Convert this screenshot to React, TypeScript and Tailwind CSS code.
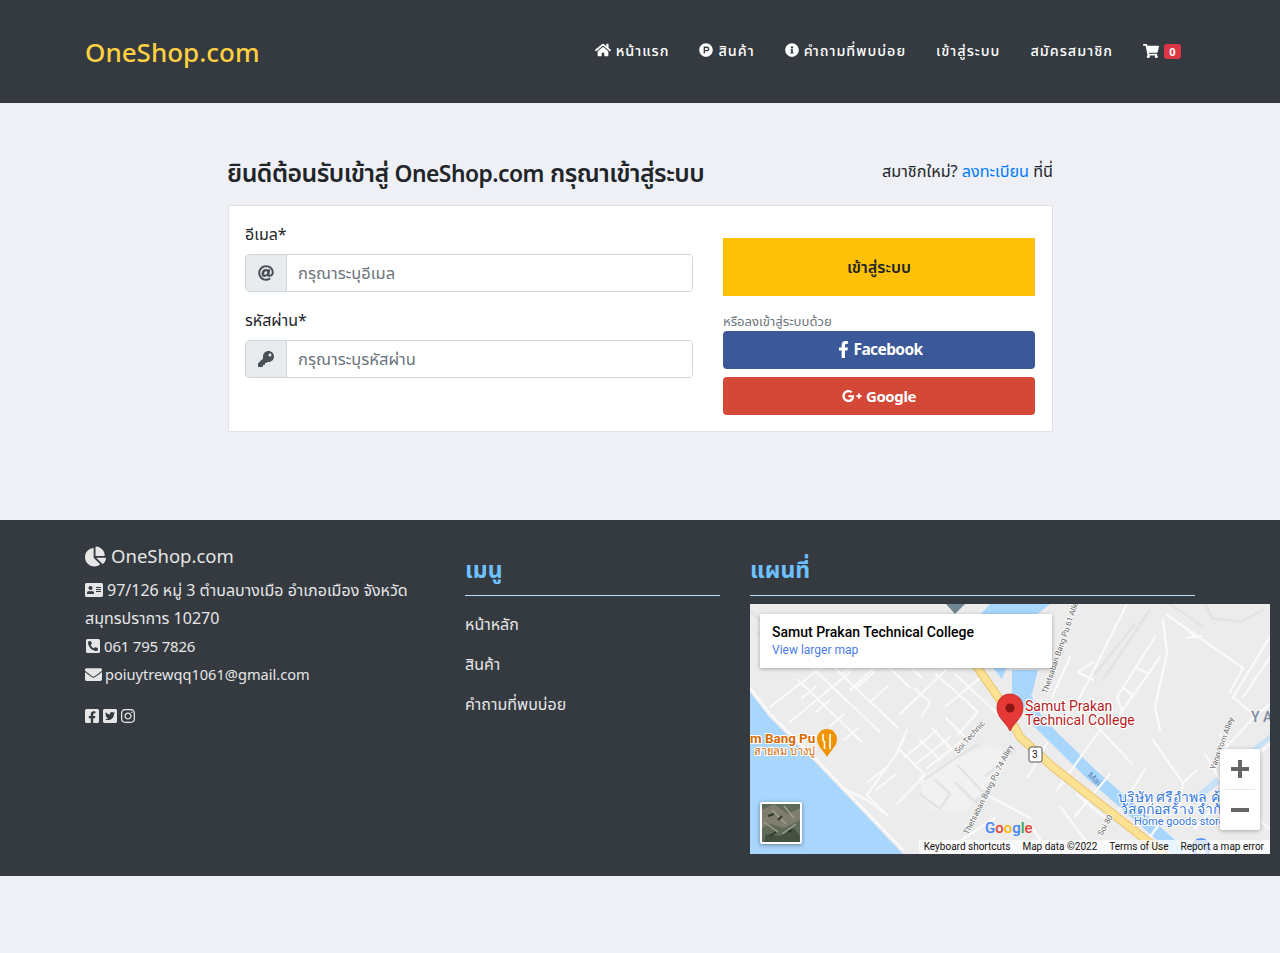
import {
  FaAddressCard,
  FaAt,
  FaChartPie,
  FaEnvelope,
  FaFacebookF,
  FaFacebookSquare,
  FaGooglePlusG,
  FaHome,
  FaInfoCircle,
  FaInstagram,
  FaKey,
  FaPhoneSquareAlt,
  FaProductHunt,
  FaShoppingCart,
  FaTwitterSquare,
} from "react-icons/fa";

const font = "font-['Noto_Sans','Noto_Sans_Thai','Noto_Sans_Thai_Looped',sans-serif]";

const roads = [
  // coast and the streets behind it
  "M0 84 L20 110 L63 152 L153 246",
  "M150 146 L175 171 L148 199",
  "M157 126 L147 149 L117 191 L138 212",
  "M97 186 L117 196 L138 212",
  "M118 178 L138 162 M126 186 L146 170",
  "M155 153 L187 126 M167 159 L200 133 M177 164 L213 136",
  "M170 136 L190 156 M182 124 L202 146 M196 114 L216 134",
  // grid at the left
  "M20 103 L77 59 M40 118 L100 68",
  "M60 62 L130 128 M72 52 L148 124 M48 76 L112 138",
  "M78 58 L96 42 M92 70 L110 54 M106 84 L124 68 M120 98 L138 82",
  "M66 82 L52 94 M80 96 L66 108 M94 110 L80 122 M108 124 L94 136",
  "M120 44 L160 84 M132 36 L172 74 M100 86 L150 40",
  // middle, below the info card
  "M164 84 L180 98 L172 112 M186 70 L228 108 L208 130 M205 70 L250 112",
  "M150 110 L196 66 M196 102 L230 74",
  // right of the yellow road
  "M350 126 L307 186 M297 139 L278 173",
  "M403 136 L433 179 L447 166 M433 179 L430 200",
  "M320 53 L302 93 M377 0 L330 93 L308 120",
  "M328 68 L343 58 M328 68 L343 76",
  "M405 33 L367 93 L373 109 M410 53 L370 110",
  "M385 63 L397 69 M373 84 L383 91",
  "M417 11 L493 64 L480 88 M437 24 L445 34 M437 34 L452 32",
  "M413 16 L417 49 L405 103 L410 126",
  "M520 33 L483 93 M520 53 L493 93",
  "M483 93 L505 112 L470 150 M505 112 L520 100",
  "M455 150 L478 190 M470 130 L490 165 L520 140",
  "M310 202 L345 250 M326 190 L355 214 M280 220 L300 250 M360 170 L325 212",
  "M395 165 L370 205 M420 205 L395 240 M345 120 L382 160",
  "M462 205 L445 225 M490 200 L520 225",
  "M235 190 L280 214 M205 240 L245 214",
];

const faintRoads = [
  "M400 6 L353 76 M385 20 L345 70",
  "M175 175 L200 158 L228 140 M170 190 L190 205 L200 190 L185 176",
  "M205 178 L225 198 L240 184 M208 162 L235 190",
  "M0 6 L14 22 L8 30",
  "M455 0 L462 14 L490 18 L512 6 M420 0 L452 22",
  "M236 172 L265 146",
];

function MapDrawing() {
  return (
    <svg viewBox="0 0 520 250" className="block w-[520px] h-[250px]">
      <rect width="520" height="250" fill="#ececec" />
      <path d="M167 172 L240 140 L262 150 L215 210 L180 205 Z" fill="#f1f1f1" />
      <path d="M0 88 L20 114 L63 156 L153 250 L0 250 Z" fill="#a9d6fd" />
      <path d="M240 0 L300 0 L275 20 L262 50 L252 75 L240 60 L222 20 Z" fill="#a9d6fd" />
      <path d="M262 66 L288 66 L282 90 L262 90 Z" fill="#a9d6fd" />
      <path d="M270 82 L288 118 L340 169 L432 250" fill="none" stroke="#a9d6fd" strokeWidth="12" />
      <path d="M440 195 L520 130 L520 136 L445 200 Z" fill="#c7e2f7" />
      <g fill="none" stroke="#fafafa" strokeWidth="2.2" strokeLinecap="round" strokeLinejoin="round">
        {roads.map((d) => (
          <path key={d} d={d} />
        ))}
      </g>
      <g fill="none" stroke="#e1e3e6" strokeWidth="2.4" strokeLinecap="round" strokeLinejoin="round">
        {faintRoads.map((d) => (
          <path key={d} d={d} />
        ))}
      </g>
      <path d="M205 14 L225 60 L250 96 L270 133 L303 163 L400 239 L415 250" fill="none" stroke="#ecca7e" strokeWidth="9" />
      <path d="M205 14 L225 60 L250 96 L270 133 L303 163 L400 239 L415 250" fill="none" stroke="#fde293" strokeWidth="6.5" />
      <path d="M196 0 L215 0 L205 10 Z" fill="#6f8792" />
      <path
        d="M260 90 C252 90 247 96 247 104 C247 114 256 118 260 127 C264 118 273 114 273 104 C273 96 268 90 260 90 Z"
        fill="#e53935"
        stroke="#b71c1c"
        strokeWidth="0.7"
      />
      <circle cx="260" cy="104" r="4.5" fill="#8b1414" />
      <path
        d="M77 125 C71 125 67 130 67 135 C67 142 73 146 77 153 C81 146 87 142 87 135 C87 130 83 125 77 125 Z"
        fill="#f09300"
      />
      <path d="M73 130 L73 136 L74.5 138 L74.5 145 M80 130 L80 145" stroke="#fff" strokeWidth="1.6" fill="none" />
      <rect x="279" y="143" width="13" height="15" rx="2" fill="#fff" stroke="#555" strokeWidth="1" />
      <circle cx="451" cy="244" r="10" fill="#5e97f6" />
      <path d="M447 243 h8 v6 h-8 Z M449 243 a2 2 0 0 1 4 0" fill="#fff" stroke="#fff" strokeWidth="0.8" />
      <g className="font-['Roboto',sans-serif]">
        <text x="275" y="107" fontSize="14" fill="#b71c1c" stroke="#fff" strokeWidth="2.5" paintOrder="stroke">Samut Prakan</text>
        <text x="275" y="121" fontSize="14" fill="#b71c1c" stroke="#fff" strokeWidth="2.5" paintOrder="stroke">Technical College</text>
        <text x="0" y="139" fontSize="13.4" fontWeight="700" fill="#d96a00" stroke="#fff" strokeWidth="2" paintOrder="stroke">m Bang Pu</text>
        <text x="4" y="151" fontSize="11" fill="#d96a00" stroke="#fff" strokeWidth="2" paintOrder="stroke">สายลม บางปู</text>
        <text x="368" y="198" fontSize="14" fill="#3578dc" stroke="#fff" strokeWidth="2" paintOrder="stroke">บริษัท ศรีอำพล คู้</text>
        <text x="370" y="210" fontSize="14" fill="#3578dc" stroke="#fff" strokeWidth="2" paintOrder="stroke">วัสดุก่อสร้าง จำกัด</text>
        <text x="384" y="221" fontSize="11" fill="#3578dc" stroke="#fff" strokeWidth="2" paintOrder="stroke">Home goods store</text>
        <text x="501" y="118" fontSize="14" fontWeight="500" fill="#7b8ba3">Y A</text>
        <text x="282" y="154" fontSize="10" fill="#222">3</text>
        <text transform="translate(218 231) rotate(-63)" fontSize="8" fill="#666" stroke="#fff" strokeWidth="1.5" paintOrder="stroke">Thetsaban Bang Pu 74 Alley</text>
        <text transform="translate(297 90) rotate(-71)" fontSize="8" fill="#666" stroke="#fff" strokeWidth="1.5" paintOrder="stroke">Thetsaban Bang Pu 61 Alley</text>
        <text transform="translate(208 150) rotate(-48)" fontSize="8" fill="#666" stroke="#fff" strokeWidth="1.5" paintOrder="stroke">Soi Technic</text>
        <text transform="translate(465 166) rotate(-70)" fontSize="8" fill="#666" stroke="#fff" strokeWidth="1.5" paintOrder="stroke">Yang Yom Alley</text>
        <text transform="translate(337 172) rotate(42)" fontSize="9" fill="#5a86b5">Mai</text>
        <text transform="translate(352 232) rotate(-60)" fontSize="8" fill="#666" stroke="#fff" strokeWidth="1.5" paintOrder="stroke">Soi 80</text>
        <text x="235" y="229" fontSize="15" fontWeight="500">
          <tspan fill="#4285f4">G</tspan>
          <tspan fill="#ea4335">o</tspan>
          <tspan fill="#fbbc05">o</tspan>
          <tspan fill="#4285f4">g</tspan>
          <tspan fill="#34a853">l</tspan>
          <tspan fill="#ea4335">e</tspan>
        </text>
      </g>
    </svg>
  );
}

function Map() {
  return (
    <div className="relative w-[520px] h-[250px] mt-2 overflow-hidden font-['Roboto',sans-serif]">
      <MapDrawing />
      <div className="absolute left-[10px] top-[10px] w-[292px] h-[54px] bg-white shadow-[0_1px_4px_rgba(0,0,0,0.3)] px-3 pt-[9px]">
        <div className="text-[14px] leading-[18px] font-medium text-black">Samut Prakan Technical College</div>
        <div className="text-[12px] leading-[18px] text-[#4a7ae8]">View larger map</div>
      </div>
      <div className="absolute left-[10px] bottom-[10px] w-[42px] h-[42px] rounded-[2px] border-2 border-white bg-[#5f6a58] shadow-[0_1px_4px_rgba(0,0,0,0.4)] overflow-hidden">
        <svg viewBox="0 0 38 38" className="w-full h-full">
          <rect width="38" height="38" fill="#5f6a58" />
          <path d="M0 6 L12 0 L26 10 L38 4 V16 L22 24 L8 20 L0 24 Z" fill="#7f7d6e" />
          <path d="M4 30 L18 32 L32 24 L38 32 V38 H2 Z" fill="#445142" />
          <path d="M10 6 L24 20 M22 2 L32 14 M2 18 L16 28 M20 30 L34 20" stroke="#a09e90" strokeWidth="1.5" fill="none" />
          <path d="M6 12 L12 10 M16 16 L20 12 M26 28 L30 26 M8 32 L14 28" stroke="#2f382e" strokeWidth="2" fill="none" />
        </svg>
      </div>
      <div className="absolute right-[10px] top-[145px] w-10 h-[81px] bg-white rounded-[2px] shadow-[0_1px_4px_rgba(0,0,0,0.3)] flex flex-col items-center">
        <svg viewBox="0 0 18 18" className="w-[18px] h-[18px] mt-[11px]">
          <path d="M0 7 H7 V0 H11 V7 H18 V11 H11 V18 H7 V11 H0 Z" fill="#666" />
        </svg>
        <div className="w-[30px] h-px bg-[#e6e6e6] mt-[11px]" />
        <div className="w-[18px] h-1 bg-[#666] mt-[18px]" />
      </div>
      <div className="absolute right-0 bottom-0 h-[14px] flex items-center text-[10px] leading-[14px] text-[#111]">
        <span className="bg-white/75 pl-[5px] pr-[6px]">Keyboard shortcuts</span>
        <span className="bg-white/75 px-[6px]">Map data ©2022</span>
        <span className="bg-white/75 px-[6px]">Terms of Use</span>
        <span className="bg-white/75 px-[6px]">Report a map error</span>
      </div>
    </div>
  );
}

function NavItem({ icon, label }: { icon?: React.ReactNode; label: string }) {
  return (
    <a className="flex items-center gap-[5px] text-white text-[14.4px] tracking-[1px] font-medium -mt-[2px]">
      {icon}
      {label}
    </a>
  );
}

function Field({ label, icon, placeholder }: { label: string; icon: React.ReactNode; placeholder: string }) {
  return (
    <div>
      <div className="text-[16px] leading-6 text-[#212529]">{label}</div>
      <div className="mt-2 flex h-[38px] w-[448px] rounded border border-[#ced4da] overflow-hidden">
        <div className="w-[41px] flex items-center justify-center bg-[#e9ecef] border-r border-[#ced4da] text-[#495057]">
          {icon}
        </div>
        <div className="flex-1 bg-white pl-[11px] text-[16.5px] leading-[36px] text-[#6c757d]">{placeholder}</div>
      </div>
    </div>
  );
}

export default function App() {
  return (
    <div className={`${font} min-h-[953px] bg-[#eef0f5]`}>
      <header className="h-[103px] bg-[#343a40] pl-[85px] pr-[99px] flex items-center justify-between">
        <a className="text-[26px] font-medium text-[#ffd040] mt-[1px]">OneShop.com</a>
        <nav className="flex items-center gap-[30px]">
          <NavItem icon={<FaHome size={16} />} label="หน้าแรก" />
          <NavItem icon={<FaProductHunt size={14} />} label="สินค้า" />
          <NavItem icon={<FaInfoCircle size={14} />} label="คำถามที่พบบ่อย" />
          <NavItem label="เข้าสู่ระบบ" />
          <NavItem label="สมัครสมาชิก" />
          <a className="flex items-center gap-[5px] text-white">
            <FaShoppingCart size={16} />
            <span className="h-[15px] w-[17px] rounded-[3px] bg-[#dc3545] text-[11px] font-bold leading-[15px] text-center">0</span>
          </a>
        </nav>
      </header>

      <main className="w-[825px] h-[417px] ml-[228px] pt-[52px]">
        <div className="flex items-center justify-between h-[36px] mb-[14px]">
          <h1 className="text-[24.8px] font-semibold tracking-[-0.5px] text-[#212529] -ml-px">
            ยินดีต้อนรับเข้าสู่ <span className="text-[22.8px]">OneShop.com</span> กรุณาเข้าสู่ระบบ
          </h1>
          <p className="text-[16.2px] text-[#212529] -mt-[3px]">
            สมาชิกใหม่? <a className="text-[#007bff]">ลงทะเบียน</a> ที่นี่
          </p>
        </div>
        <section className="h-[227px] border border-[#dfe2e6] bg-white pl-4 pr-[17px] pt-4 flex justify-between">
          <div className="flex flex-col gap-4">
            <Field label="อีเมล*" icon={<FaAt size={16} />} placeholder="กรุณาระบุอีเมล" />
            <Field label="รหัสผ่าน*" icon={<FaKey size={16} />} placeholder="กรุณาระบุรหัสผ่าน" />
          </div>
          <div className="w-[312px] pt-4">
            <button className="w-full h-[58px] bg-[#ffc107] text-[16px] font-semibold text-[#212529]">เข้าสู่ระบบ</button>
            <div className="mt-[18px] text-[13.1px] leading-[17px] text-[#6c757d] -translate-y-px">หรือลงเข้าสู่ระบบด้วย</div>
            <button className="w-full h-[38px] rounded bg-[#3b5998] text-white text-[15.5px] font-bold tracking-[-0.6px] flex items-center justify-center gap-[1px]">
              <FaFacebookF size={17} className="-mt-px" />
              Facebook
            </button>
            <button className="w-full h-[38px] mt-2 rounded bg-[#d34836] text-white text-[15px] font-bold tracking-[-0.4px] flex items-center justify-center gap-1">
              <FaGooglePlusG size={20} />
              Google
            </button>
          </div>
        </section>
      </main>

      <footer className="h-[356px] bg-[#343a40] pl-[85px] pt-[22px] flex">
        <div className="w-[380px] text-[#e6e6e6] text-[16px]">
          <div className="flex items-center gap-[5px] text-[18.5px] leading-[30px] h-[30px] -mt-px">
            <FaChartPie size={21} />
            OneShop.com
          </div>
          <p className="w-[330px] mt-[5px] leading-[28px]">
            <FaAddressCard size={18} className="inline mr-1 -mt-1" />
            97/126 หมู่ 3 ตำบลบางเมือ อำเภอเมือง จังหวัดสมุทรปราการ 10270
          </p>
          <p className="leading-[28px] text-[15px] tracking-[-0.2px]">
            <FaPhoneSquareAlt size={16} className="inline mr-[3px] -mt-1" />
            061 795 7826
          </p>
          <p className="leading-[28px] text-[14.6px]">
            <FaEnvelope size={17} className="inline mr-[3px] -mt-1" />
            poiuytrewqq1061@gmail.com
          </p>
          <div className="flex gap-[2px] mt-[20px] -ml-px">
            <FaFacebookSquare size={16} />
            <FaTwitterSquare size={16} />
            <FaInstagram size={16} />
          </div>
        </div>
        <div className="w-[255px] mr-[30px]">
          <h2 className="h-[54px] pt-[9px] border-b border-[#b9dcf8] text-[23px] font-bold leading-[36px] text-[#6ec1ff]">เมนู</h2>
          <ul className="mt-2 text-[16px] text-[#e6e6e6]">
            <li className="h-10 leading-10">หน้าหลัก</li>
            <li className="h-10 leading-10">สินค้า</li>
            <li className="h-10 leading-10">คำถามที่พบบ่อย</li>
          </ul>
        </div>
        <div className="w-[445px]">
          <h2 className="h-[54px] pt-[9px] border-b border-[#b9dcf8] text-[23px] font-bold leading-[36px] text-[#6ec1ff]">แผนที่</h2>
          <Map />
        </div>
      </footer>
    </div>
  );
}
